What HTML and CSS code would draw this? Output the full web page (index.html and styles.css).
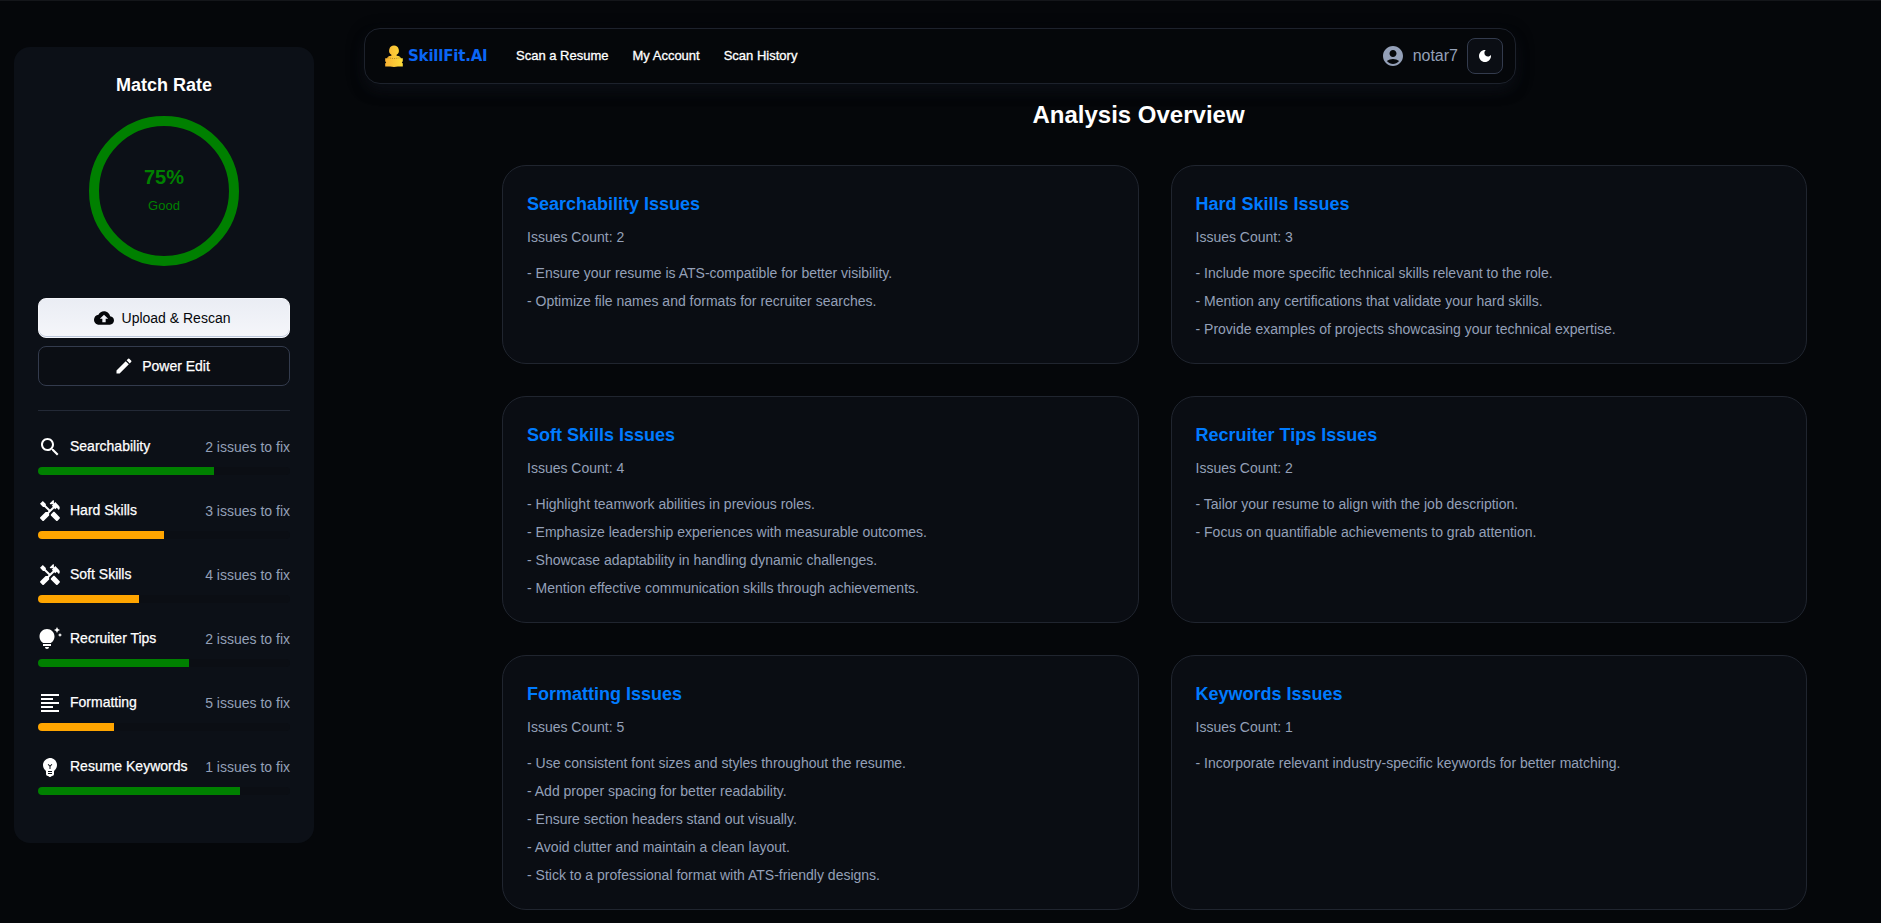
FILE: index.html
```html
<!DOCTYPE html>
<html lang="en">
<head>
<meta charset="utf-8">
<title>SkillFit.AI</title>
<link rel="stylesheet" href="styles.css">
</head>
<body>
<div class="page">
  <aside class="sidebar">
    <h2 class="sidebar-title">Match Rate</h2>
    <div class="ring"><span class="ring-value">75%</span><span class="ring-label">Good</span></div>
    <button class="btn btn-light"><svg class="icon-20" viewBox="0 0 24 24"><path d="M19.35 10.04C18.67 6.59 15.64 4 12 4 9.11 4 6.6 5.64 5.35 8.04 2.34 8.36 0 10.91 0 14c0 3.31 2.69 6 6 6h13c2.76 0 5-2.24 5-5 0-2.64-2.05-4.78-4.65-4.96M14 13v4h-4v-4H7l5-5 5 5z"/></svg>Upload &amp; Rescan</button>
    <button class="btn btn-dark"><svg class="icon-20" viewBox="0 0 24 24"><path d="M3 17.25V21h3.75L17.81 9.94l-3.75-3.75zM20.71 7.04c.39-.39.39-1.02 0-1.41l-2.34-2.34a.996.996 0 0 0-1.41 0l-1.83 1.83 3.75 3.75z"/></svg>Power Edit</button>
    <hr class="divider">
    <ul class="metrics">
      <li class="metric"><div class="metric-row"><svg class="icon-24" viewBox="0 0 24 24"><path d="M15.5 14h-.79l-.28-.27C15.41 12.59 16 11.11 16 9.5 16 5.91 13.09 3 9.5 3S3 5.91 3 9.5 5.91 16 9.5 16c1.61 0 3.09-.59 4.23-1.57l.27.28v.79l5 4.99L20.49 19zm-6 0C7.01 14 5 11.99 5 9.5S7.01 5 9.5 5 14 7.01 14 9.5 11.99 14 9.5 14"/></svg><span class="metric-name">Searchability</span><span class="metric-note">2 issues to fix</span></div><div class="bar"><div class="fill good" style="width:70%"></div></div></li>
      <li class="metric"><div class="metric-row"><svg class="icon-24" viewBox="0 0 24 24"><path d="m21.67 18.17-5.3-5.3h-.99l-2.54 2.54v.99l5.3 5.3c.39.39 1.02.39 1.41 0l2.12-2.12c.39-.38.39-1.02 0-1.41"/><path d="m17.34 10.19 1.41-1.41 2.12 2.12c1.17-1.17 1.17-3.07 0-4.24l-3.54-3.54-1.41 1.41V1.71L15.22 1l-3.54 3.54.71.71h2.83l-1.41 1.41 1.06 1.06-2.89 2.89-4.13-4.13V5.06L4.83 2.04 2 4.87 5.03 7.9h1.41l4.13 4.13-.85.85H7.6l-5.3 5.3c-.39.39-.39 1.02 0 1.41l2.12 2.12c.39.39 1.02.39 1.41 0l5.3-5.3v-2.12l5.15-5.15z"/></svg><span class="metric-name">Hard Skills</span><span class="metric-note">3 issues to fix</span></div><div class="bar"><div class="fill warn" style="width:50%"></div></div></li>
      <li class="metric"><div class="metric-row"><svg class="icon-24" viewBox="0 0 24 24"><path d="m21.67 18.17-5.3-5.3h-.99l-2.54 2.54v.99l5.3 5.3c.39.39 1.02.39 1.41 0l2.12-2.12c.39-.38.39-1.02 0-1.41"/><path d="m17.34 10.19 1.41-1.41 2.12 2.12c1.17-1.17 1.17-3.07 0-4.24l-3.54-3.54-1.41 1.41V1.71L15.22 1l-3.54 3.54.71.71h2.83l-1.41 1.41 1.06 1.06-2.89 2.89-4.13-4.13V5.06L4.83 2.04 2 4.87 5.03 7.9h1.41l4.13 4.13-.85.85H7.6l-5.3 5.3c-.39.39-.39 1.02 0 1.41l2.12 2.12c.39.39 1.02.39 1.41 0l5.3-5.3v-2.12l5.15-5.15z"/></svg><span class="metric-name">Soft Skills</span><span class="metric-note">4 issues to fix</span></div><div class="bar"><div class="fill warn" style="width:40%"></div></div></li>
      <li class="metric"><div class="metric-row"><svg class="icon-24" viewBox="0 0 24 24"><path d="M7 20h4c0 1.1-.9 2-2 2s-2-.9-2-2m-2-1h8v-2H5zm11.5-9.5c0 3.82-2.66 5.86-3.77 6.5H5.27c-1.11-.64-3.77-2.68-3.77-6.5C1.5 5.36 4.86 2 9 2s7.5 3.36 7.5 7.5m4.87-2.13L20 8l1.37.63L22 10l.63-1.37L24 8l-1.37-.63L22 6zM19 6l.94-2.06L22 3l-2.06-.94L19 0l-.94 2.06L16 3l2.06.94z"/></svg><span class="metric-name">Recruiter Tips</span><span class="metric-note">2 issues to fix</span></div><div class="bar"><div class="fill good" style="width:60%"></div></div></li>
      <li class="metric"><div class="metric-row"><svg class="icon-24" viewBox="0 0 24 24"><path d="M15 15H3v2h12zm0-8H3v2h12zM3 13h18v-2H3zm0 8h18v-2H3zM3 3v2h18V3z"/></svg><span class="metric-name">Formatting</span><span class="metric-note">5 issues to fix</span></div><div class="bar"><div class="fill warn" style="width:30%"></div></div></li>
      <li class="metric"><div class="metric-row"><svg class="icon-24" viewBox="0 0 24 24"><path fill-rule="evenodd" d="M12 3c-.46 0-.93.04-1.4.14-2.76.53-4.96 2.76-5.48 5.52-.48 2.61.48 5.01 2.22 6.56.43.38.66.91.66 1.47V19c0 1.1.9 2 2 2h.28c.35.6.98 1 1.72 1s1.380-.4 1.72-1H14c1.1 0 2-.9 2-2v-2.31c0-.55.22-1.09.64-1.46C18.09 13.95 19 12.08 19 10c0-3.87-3.13-7-7-7m2 16h-4v-1h4zm0-2h-4v-1h4zm-1.5-5.59V14h-1v-2.59L9.67 9.59l.71-.71L12 10.5l1.62-1.62.71.71z"/></svg><span class="metric-name">Resume Keywords</span><span class="metric-note">1 issues to fix</span></div><div class="bar"><div class="fill good" style="width:80%"></div></div></li>
    </ul>
  </aside>
  <div class="content">
    <header class="navbar">
      <a class="logo"><svg class="logo-mark" viewBox="0 0 18 22"><defs><linearGradient id="gold" x1="0" x2="1" y1="0" y2="0"><stop offset="0" stop-color="#f9b233"/><stop offset="1" stop-color="#fddc3a"/></linearGradient></defs><path fill="url(#gold)" d="M9 .5a5 5 0 0 1 2.6 9.2v1c2.600.2 4 1 4.200 2.500h2v3l-1 1.200 1 1.200v2.800h-5l-3.800.6-3.800-.6h-5v-2.800l1-1.200-1-1.200v-3h2c.2-1.500 1.600-2.300 4.200-2.500v-1A5 5 0 0 1 9 .5"/><path d="M2.500 12.800 9 13.600l6.500-.8" fill="none" stroke="#8a6414" stroke-width=".6" stroke-dasharray="1.200 1"/></svg><span class="logo-text">SkillFit.AI</span></a>
      <nav class="links"><a>Scan a Resume</a><a>My Account</a><a>Scan History</a></nav>
      <div class="user"><svg class="icon-24" viewBox="0 0 24 24"><path d="M12 2C6.48 2 2 6.48 2 12s4.48 10 10 10 10-4.48 10-10S17.52 2 12 2m0 4c1.93 0 3.5 1.57 3.5 3.5S13.93 13 12 13s-3.5-1.57-3.5-3.5S10.07 6 12 6m0 14c-2.03 0-4.43-.82-6.14-2.88C7.55 15.8 9.68 15 12 15s4.45.8 6.14 2.12C16.43 19.18 14.03 20 12 20"/></svg><span class="user-name">notar7</span>
      <button class="mode"><svg class="icon-16" viewBox="0 0 24 24"><path d="M12 3c-4.97 0-9 4.03-9 9s4.03 9 9 9 9-4.03 9-9c0-.46-.04-.92-.1-1.36-.98 1.37-2.58 2.26-4.4 2.26-2.98 0-5.4-2.42-5.4-5.4 0-1.81.89-3.42 2.26-4.4-.44-.06-.9-.1-1.36-.1"/></svg></button></div>
    </header>
    <main class="main">
      <h1 class="title">Analysis Overview</h1>
      <div class="cards">
        <section class="card"><h3>Searchability Issues</h3><p class="count">Issues Count: 2</p><p class="item">- Ensure your resume is ATS-compatible for better visibility.</p><p class="item">- Optimize file names and formats for recruiter searches.</p></section>
        <section class="card"><h3>Hard Skills Issues</h3><p class="count">Issues Count: 3</p><p class="item">- Include more specific technical skills relevant to the role.</p><p class="item">- Mention any certifications that validate your hard skills.</p><p class="item">- Provide examples of projects showcasing your technical expertise.</p></section>
        <section class="card"><h3>Soft Skills Issues</h3><p class="count">Issues Count: 4</p><p class="item">- Highlight teamwork abilities in previous roles.</p><p class="item">- Emphasize leadership experiences with measurable outcomes.</p><p class="item">- Showcase adaptability in handling dynamic challenges.</p><p class="item">- Mention effective communication skills through achievements.</p></section>
        <section class="card"><h3>Recruiter Tips Issues</h3><p class="count">Issues Count: 2</p><p class="item">- Tailor your resume to align with the job description.</p><p class="item">- Focus on quantifiable achievements to grab attention.</p></section>
        <section class="card"><h3>Formatting Issues</h3><p class="count">Issues Count: 5</p><p class="item">- Use consistent font sizes and styles throughout the resume.</p><p class="item">- Add proper spacing for better readability.</p><p class="item">- Ensure section headers stand out visually.</p><p class="item">- Avoid clutter and maintain a clean layout.</p><p class="item">- Stick to a professional format with ATS-friendly designs.</p></section>
        <section class="card"><h3>Keywords Issues</h3><p class="count">Issues Count: 1</p><p class="item">- Incorporate relevant industry-specific keywords for better matching.</p></section>
      </div>
    </main>
  </div>
</div>
</body>
</html>
```
FILE: styles.css
```css
* { box-sizing: border-box; margin: 0; padding: 0; }
html { background: #05070a; }
body {
  height: 923px;
  overflow: hidden;
  background: #05070a;
  color: #fff;
  font-family: "Liberation Sans", Arial, sans-serif;
  font-size: 14px;
}
.page {
  display: flex;
  align-items: flex-start;
  height: 923px;
  border-top: 1px solid #14161a;
}
svg { fill: currentColor; flex: none; display: block; }
.icon-16 { width: 16px; height: 16px; }
.icon-20 { width: 20px; height: 20px; }
.icon-24 { width: 24px; height: 24px; }

.sidebar {
  width: 300px;
  height: 796px;
  margin: 46px 0 0 14px;
  padding: 24px;
  border-radius: 16px;
  background: #0c1017;
  flex: none;
}
.sidebar-title {
  font-size: 18px;
  line-height: 28px;
  text-align: center;
}
.ring {
  display: flex;
  flex-direction: column;
  align-items: center;
  width: 150px;
  height: 150px;
  margin: 17px auto 32px;
  padding-top: 36px;
  border: 10px solid #008000;
  border-radius: 50%;
  color: #008000;
}
.ring-value { font-size: 20px; font-weight: 700; line-height: 30px; }
.ring-label { font-size: 13px; line-height: 20px; margin-top: 4px; }

.btn {
  display: flex;
  align-items: center;
  justify-content: center;
  gap: 8px;
  width: 252px;
  height: 40px;
  padding-right: 4px;
  border-radius: 8px;
  font: 14px "Liberation Sans", Arial, sans-serif;
}
.btn-light {
  border: 1px solid #f5f6fa;
  color: #05070a;
  background: linear-gradient(to bottom, #eaedf4, #f5f6fa);
  box-shadow: inset 0 -1px 0 #bdc8db;
}
.btn-dark {
  margin-top: 8px;
  border: 1px solid #333b4d;
  color: #fff;
  background: #0b0e14;
  -webkit-text-stroke: .25px #fff;
}
.divider {
  margin: 24px 0;
  border: 0;
  border-top: 1px solid #232936;
}
.metrics { list-style: none; }
.metric { height: 64px; }
.metric-row { display: flex; align-items: center; height: 24px; }
.metric-name { margin-left: 8px; padding-bottom: 2px; -webkit-text-stroke: .25px #fff; }
.metric-note { margin-left: auto; color: #94a0b8; }
.bar {
  height: 8px;
  margin-top: 8px;
  border-radius: 4px;
  overflow: hidden;
  background: #0b0e14;
}
.fill { height: 100%; }
.good { background: #008000; }
.warn { background: #ffa500; }

.content { flex: 1; min-width: 0; }
.navbar {
  display: flex;
  align-items: center;
  width: 1152px;
  height: 56px;
  margin: 27px 0 0 50px;
  padding: 0 12px 0 20px;
  border: 1px solid #1d222c;
  border-radius: 16px;
  background: #05070a;
  box-shadow: 0 4px 16px hsla(220, 30%, 5%, .7), 0 8px 16px -5px hsla(220, 25%, 10%, .8);
}
.logo { display: flex; align-items: center; gap: 5px; width: 107px; }
.logo-mark { width: 18px; height: 22px; }
.logo-text {
  color: #0a66f5;
  font: 700 15px/20px "DejaVu Sans", sans-serif;
  letter-spacing: -.2px;
  white-space: nowrap;
}
.links {
  display: flex;
  gap: 24px;
  margin-left: 24px;
  padding-bottom: 2px;
  font-size: 13px;
  -webkit-text-stroke: .3px #fff;
}
.user {
  display: flex;
  align-items: center;
  margin-left: auto;
  color: #94a0b8;
  font-size: 16px;
}
.user-name { margin: 0 9px 0 8px; }
.mode {
  display: flex;
  align-items: center;
  justify-content: center;
  width: 36px;
  height: 36px;
  border: 1px solid #333b4d;
  border-radius: 8px;
  background: #0b0e14;
  color: #fff;
}

.main { width: 1337px; margin: 13px 0 0 156px; }
.title { font-size: 24px; line-height: 36px; text-align: center; }
.cards {
  display: grid;
  grid-template-columns: 1fr 1fr;
  gap: 32px;
  margin-top: 32px;
  padding-left: 32px;
}
.card {
  padding: 24px 24px 20px;
  border: 1px solid #20252f;
  border-radius: 24px;
  background: #0a0d13;
}
.card h3 { color: #007bff; font-size: 18px; line-height: 28px; }
.count { margin: 9px 0 11px; color: #94a0b8; line-height: 21px; }
.item { color: #94a0b8; line-height: 28px; }
```
